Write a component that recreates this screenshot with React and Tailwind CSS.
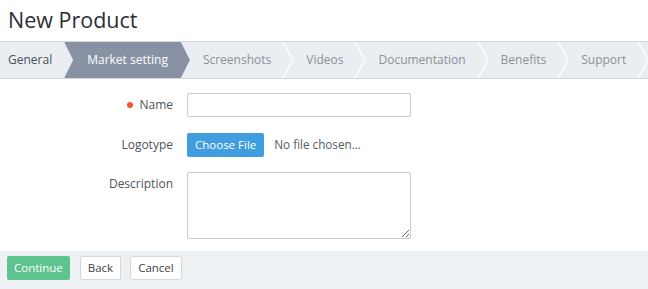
import React from "react";

const tabs = ["General", "Market setting", "Screenshots", "Videos", "Documentation", "Benefits", "Support"];
const activeTab = 1;

function Chevron() {
  return (
    <svg
      className="absolute right-0 top-0 h-full w-[10px]"
      viewBox="0 0 10 36"
      preserveAspectRatio="none"
    >
      <polyline points="0,0 10,18 0,36" fill="none" stroke="#ffffff" strokeWidth="1.3" />
    </svg>
  );
}

function TabBar() {
  return (
    <div className="flex h-[38px] border-y border-[#d6dae0] bg-[#eaedf1] text-[12px] overflow-hidden">
      {tabs.map((t, i) => {
        const isActive = i === activeTab;
        const showChevron = !isActive && i !== activeTab - 1;
        return (
          <div
            key={t}
            className={`relative flex h-full shrink-0 items-center -mr-[10px] pr-[22px] ${
              i === 0 ? "pl-[8px]" : "pl-[23px]"
            } ${
              isActive
                ? "z-10 bg-[#8892a4] text-white [clip-path:polygon(0_0,calc(100%-9px)_0,100%_50%,calc(100%-9px)_100%,0_100%,9px_50%)]"
                : i === 0
                ? "text-[#4a4f57]"
                : "text-[#8a9099]"
            }`}
          >
            {t}
            {showChevron && <Chevron />}
          </div>
        );
      })}
    </div>
  );
}

function Row({ label, required, top, className = "", children }) {
  return (
    <div className={`flex ${top ? "items-start" : "items-center"} ${className}`}>
      <div
        className={`flex w-[173px] shrink-0 items-center justify-end text-[12px] text-[#4d535c] ${
          top ? "pt-[3px]" : ""
        }`}
      >
        {required && <span className="mr-[6px] inline-block h-[6px] w-[6px] rounded-full bg-[#f15a2b]" />}
        {label}
      </div>
      <div className="ml-[14px]">{children}</div>
    </div>
  );
}

export default function App() {
  return (
    <div className="h-[289px] w-[648px] overflow-hidden bg-white font-['Open_Sans',sans-serif]">
      <h1 className="px-[8px] pt-[4px] pb-[6px] text-[21.5px] leading-[31px] text-[#2b2f35]">New Product</h1>
      <TabBar />

      <div className="flex flex-col pt-[14px] pb-[12px]">
        <Row label="Name" required>
          <input className="block h-[24px] w-[224px] rounded-[2px] border border-[#c6cbd2] px-2 text-[12px] outline-none" />
        </Row>
        <Row label="Logotype" className="mt-[16px]">
          <div className="flex items-center">
            <button className="h-[24px] rounded-[2px] bg-[#409ddf] px-[8px] text-[11.5px] text-white">Choose File</button>
            <span className="ml-[10px] text-[11.7px] text-[#555b63]">No file chosen...</span>
          </div>
        </Row>
        <Row label="Description" top className="mt-[15px]">
          <textarea className="block h-[67px] w-[224px] rounded-[2px] border border-[#c6cbd2] px-2 text-[12px] outline-none" />
        </Row>
      </div>

      <div className="flex h-[40px] items-start gap-[10px] bg-[#eef1f4] px-[7px] pt-[5px]">
        <button className="h-[24px] rounded-[2px] bg-[#5ec48e] px-[7px] text-[11.5px] text-white">Continue</button>
        <button className="h-[24px] rounded-[2px] border border-[#d3d7dc] bg-white px-[7px] text-[11.5px] text-[#3c4148]">Back</button>
        <button className="-ml-[1px] h-[24px] rounded-[2px] border border-[#d3d7dc] bg-white px-[7px] text-[11.5px] text-[#3c4148]">Cancel</button>
      </div>
    </div>
  );
}
